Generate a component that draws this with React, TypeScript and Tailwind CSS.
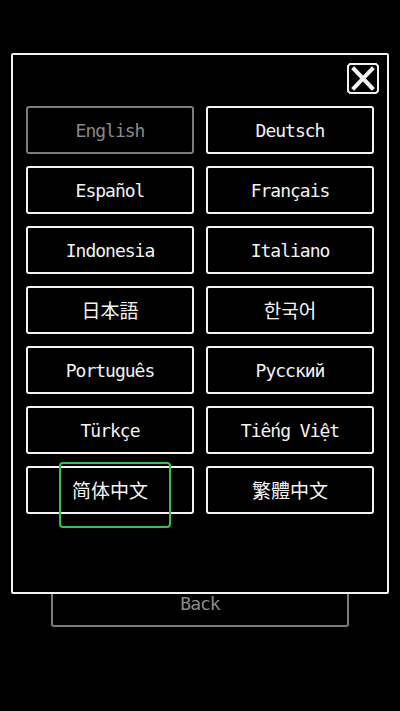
import React from "react";

type Lang = { label: string; font?: string; muted?: boolean; focus?: boolean };

const MONO = '"DejaVu Sans Mono", "Liberation Mono", monospace';

const languages: Lang[] = [
  { label: "English", muted: true },
  { label: "Deutsch" },
  { label: "Español" },
  { label: "Français" },
  { label: "Indonesia" },
  { label: "Italiano" },
  { label: "日本語", font: '"Noto Sans CJK JP", sans-serif' },
  { label: "한국어", font: '"Noto Sans CJK KR", sans-serif' },
  { label: "Português" },
  { label: "Русский" },
  { label: "Türkçe" },
  { label: "Tiếng Việt" },
  { label: "简体中文", font: '"Noto Sans CJK SC", sans-serif', focus: true },
  { label: "繁體中文", font: '"Noto Sans CJK TC", sans-serif' },
];

function CloseIcon() {
  return (
    <svg width="32" height="31" viewBox="0 0 32 31" fill="none">
      <path
        d="M3 1 H29 L31 3 V28 L29 30 H3 L1 28 V3 Z"
        stroke="#f2f2f2"
        strokeWidth="2"
      />
      <path d="M7 6 L25 25 M25 6 L7 25" stroke="#f2f2f2" strokeWidth="4" strokeLinecap="square" />
    </svg>
  );
}

function LangButton({ lang }: { lang: Lang }) {
  const cjk = Boolean(lang.font);
  return (
    <div className="relative">
      <button
        className={`flex h-12 w-full items-center justify-center rounded-[3px] border-2 bg-black ${
          lang.muted ? "border-[#7c7c7c] text-[#8a8a8a]" : "border-[#f2f2f2] text-[#f4f4f4]"
        } ${cjk ? "text-[19px]" : "text-[18px] tracking-[-1px]"}`}
        style={{ fontFamily: lang.font ?? MONO }}
      >
        {lang.label}
      </button>
      {lang.focus && (
        <div className="pointer-events-none absolute left-[33px] top-[-4px] h-[66px] w-[112px] rounded-[4px] border-2 border-[#33c24d]" />
      )}
    </div>
  );
}

export default function App() {
  return (
    <div className="min-h-[711px] w-[400px] bg-black pt-[53px]" style={{ fontFamily: MONO }}>
      <div className="relative z-10 mx-[11px] h-[541px] rounded-[2px] border-2 border-[#f2f2f2] bg-black">
        <div className="flex justify-end pr-2 pt-2">
          <button className="h-[31px] w-[32px]">
            <CloseIcon />
          </button>
        </div>
        <div className="mt-3 grid grid-cols-2 gap-3 px-[13px]">
          {languages.map((l) => (
            <LangButton key={l.label} lang={l} />
          ))}
        </div>
      </div>
      <div className="mx-[51px] mt-[-15px] flex h-12 items-center justify-center rounded-[3px] border-2 border-[#7a7a7a] pt-[0px]">
        <span className="text-[18px] tracking-[-1px] text-[#8a8a8a]">Back</span>
      </div>
    </div>
  );
}
